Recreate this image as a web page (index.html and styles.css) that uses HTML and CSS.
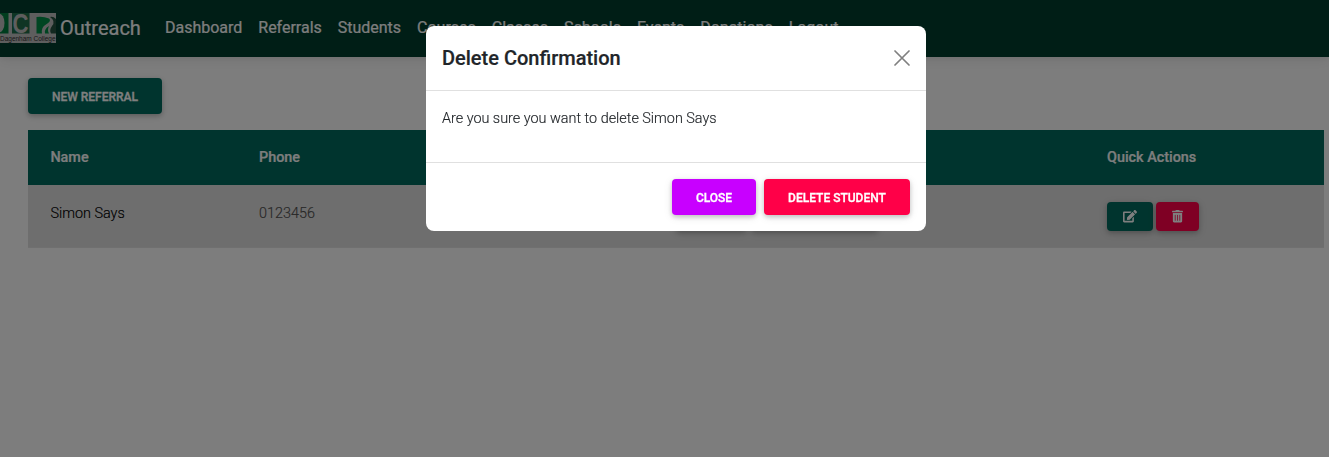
FILE: index.html
```html
<!DOCTYPE html>
<html lang="en">
<head>
<meta charset="utf-8">
<title>Outreach</title>
<link rel="stylesheet" href="styles.css">
</head>
<body>
<nav class="navbar">
  <a class="brand">
    <svg class="logo" width="56" height="30" viewBox="0 0 56 30">
      <rect width="56" height="30" fill="#bdbdbd"/>
      <rect width="8.500" height="20.500" fill="#007a3c"/>
      <ellipse cx="-1" cy="10" rx="5.500" ry="9.500" fill="#bdbdbd"/>
      <rect x="12" width="17.500" height="20.500" fill="#1f6a48"/>
      <text class="logo-letter" x="12.500" y="20" textLength="16" lengthAdjust="spacingAndGlyphs">C</text>
      <path d="M36.500 4Q43 3 49 5.500Q52 8 46 11.500Q41 14 42 20.500H36.500Z" fill="#008a45"/>
      <path d="M50 4Q53 3 56 6V20.500H51Q49 17 52 13Q56 8 50 4Z" fill="#24503e"/>
      <path d="M45 20.500Q44 16 49 13Q47 17 49 20.500Z" fill="#008a45"/>
      <text class="logo-caption" x="0" y="28" textLength="55.500" lengthAdjust="spacingAndGlyphs">Dagenham College</text>
    </svg>
    <span>Outreach</span>
  </a>
  <div class="links">
    <a>Dashboard</a><a>Referrals</a><a>Students</a><a>Courses</a><a>Classes</a><a>Schools</a><a>Events</a><a>Donations</a><a>Logout</a>
  </div>
</nav>
<main class="page">
  <button class="btn btn-green">New Referral</button>
  <table class="table">
    <colgroup><col class="c-name"><col class="c-phone"><col class="c-status"><col class="c-actions"></colgroup>
    <thead><tr><th>Name</th><th>Phone</th><th></th><th>Quick Actions</th></tr></thead>
    <tbody><tr>
      <td class="name">Simon Says</td>
      <td>0123456</td>
      <td><div class="row-buttons"><span class="btn btn-sm btn-green w-a"></span><span class="btn btn-sm btn-green w-b"></span></div></td>
      <td><div class="row-buttons quick">
        <button class="btn btn-sm btn-green edit" aria-label="Edit"><svg width="14" height="12.400" viewBox="0 0 576 512"><path fill="currentColor" d="M402.600 83.200l90.200 90.200c3.800 3.800 3.800 10 0 13.800L274.400 405.600l-92.800 10.300c-12.400 1.400-22.900-9.100-21.500-21.500l10.300-92.800L388.800 83.200c3.800-3.800 10-3.800 13.800 0zm162-22.900l-48.800-48.800c-15.200-15.200-39.900-15.200-55.200 0l-35.400 35.400c-3.800 3.800-3.800 10 0 13.800l90.200 90.200c3.800 3.800 10 3.800 13.800 0l35.400-35.400c15.200-15.300 15.200-40 0-55.200zM384 346.200V448H64V128h229.800c3.200 0 6.200-1.300 8.500-3.500l40-40c7.600-7.600 2.200-20.500-8.500-20.500H48C21.500 64 0 85.500 0 112v352c0 26.500 21.500 48 48 48h352c26.500 0 48-21.500 48-48V306.200c0-10.700-12.900-16-20.500-8.500l-40 40c-2.200 2.300-3.500 5.300-3.500 8.500z"/></svg></button>
        <button class="btn btn-sm btn-red delete" aria-label="Delete"><svg width="11" height="12.400" viewBox="0 0 448 512"><path fill="currentColor" fill-rule="evenodd" d="M32 464a48 48 0 0 0 48 48h288a48 48 0 0 0 48-48V128H32zm272-256a16 16 0 0 1 32 0v224a16 16 0 0 1-32 0zm-96 0a16 16 0 0 1 32 0v224a16 16 0 0 1-32 0zm-96 0a16 16 0 0 1 32 0v224a16 16 0 0 1-32 0zM432 32H312l-9.400-18.700A24 24 0 0 0 281.100 0H166.800a23.700 23.700 0 0 0-21.400 13.300L136 32H16A16 16 0 0 0 0 48v32a16 16 0 0 0 16 16h416a16 16 0 0 0 16-16V48a16 16 0 0 0-16-16z"/></svg></button>
      </div></td>
    </tr></tbody>
  </table>
</main>
<div class="backdrop">
  <section class="modal" role="dialog" aria-labelledby="modal-title">
    <header class="modal-header">
      <h5 class="modal-title" id="modal-title">Delete Confirmation</h5>
      <svg class="close-icon" width="16" height="16" viewBox="0 0 16 16"><path d="M1 1L15 15M15 1L1 15" stroke="#808080" stroke-width="1.700" stroke-linecap="round"/></svg>
    </header>
    <div class="modal-body">Are you sure you want to delete Simon Says</div>
    <footer class="modal-footer">
      <button class="btn btn-purple close">Close</button>
      <button class="btn btn-red confirm">Delete Student</button>
    </footer>
  </section>
</div>
</body>
</html>
```
FILE: styles.css
```css
* { box-sizing: border-box; }
html, body { height: 100%; }
body {
  margin: 0;
  overflow: hidden;
  background: #fbfbfb;
  color: #4f4f4f;
  font: 400 16px/1.6 Roboto, sans-serif;
}
.navbar {
  position: relative;
  display: flex;
  align-items: center;
  height: 57px;
  padding-bottom: 1px;
  background: #003d2c;
  color: #fbfbfb;
  box-shadow: 0 4px 12px rgba(0, 0, 0, .07), 0 2px 4px rgba(0, 0, 0, .05);
}
.brand {
  display: flex;
  align-items: center;
  gap: 4px;
  width: 157px;
  font-size: 20px;
}
.brand span, .links { -webkit-text-stroke: .2px currentColor; }
.logo { flex: none; }
.logo-letter { font: 700 27px "Liberation Sans", sans-serif; fill: #bdbdbd; }
.logo-caption { font: 7px "Liberation Sans", sans-serif; fill: #303030; }
.links { display: flex; letter-spacing: -.012px; }
.links a { padding: 8px; }
.page { padding: 21px 5px 0 28px; }
.btn {
  display: inline-flex;
  align-items: center;
  justify-content: center;
  height: 36px;
  padding: 2px 0 0;
  border: 0;
  border-radius: 4px;
  color: #fff;
  font: 500 12px/1.5 Roboto, sans-serif;
  -webkit-text-stroke: .3px currentColor;
  text-transform: uppercase;
  white-space: nowrap;
  box-shadow: 0 2px 5px rgba(0, 0, 0, .2), 0 2px 10px rgba(0, 0, 0, .1);
}
.page > .btn { display: flex; width: 134px; }
.btn-green { background: #00695c; }
.btn-red { background: #ff0048; }
.btn-purple { background: #c800ff; }
.btn-sm { height: 29px; padding: 0; }
.w-a { width: 71px; }
.w-b { width: 127px; }
.edit { width: 46px; }
.delete { width: 43px; }
.close { width: 84px; }
.confirm { width: 146px; }
.table {
  width: 100%;
  margin-top: 16px;
  table-layout: fixed;
  border-collapse: separate;
  border-spacing: 0;
  font-size: 14.400px;
}
.c-name { width: 208.600px; }
.c-phone { width: 417px; }
.c-status { width: 431px; }
.table th, .table td {
  padding: 16px 22.400px;
  text-align: left;
  vertical-align: top;
  line-height: 23px;
}
.table th {
  height: 55px;
  font-weight: 500;
  color: #fbfbfb;
  background: #00695c;
  -webkit-text-stroke: .2px currentColor;
}
.table td {
  height: 63px;
  padding-top: 17px;
  padding-bottom: 15px;
  font-weight: 300;
  background: #dcdcdc;
  border-bottom: 1px solid #e0e0e0;
  -webkit-text-stroke: .15px currentColor;
}
.table td.name { color: #000; }
.row-buttons { display: flex; gap: 4px; }
.row-buttons.quick { gap: 3px; }
.backdrop {
  position: fixed;
  inset: 0;
  display: flex;
  align-items: flex-start;
  justify-content: center;
  padding: 26px 0 0 23px;
  background: rgba(0, 0, 0, .5);
}
.modal {
  width: 500px;
  border-radius: 8px;
  background: #fff;
}
.modal-header {
  display: flex;
  align-items: center;
  justify-content: space-between;
  height: 65px;
  padding: 0 16px;
  border-bottom: 1px solid #e0e0e0;
}
.modal-title { margin: 0; color: #212529; font-size: 20px; font-weight: 500; -webkit-text-stroke: .2px currentColor; }
.modal-body {
  height: 71px;
  padding: 16px;
  color: #212529;
  font-size: 14.400px;
  font-weight: 300;
  -webkit-text-stroke: .15px currentColor;
}
.modal-footer {
  display: flex;
  justify-content: flex-end;
  gap: 8px;
  height: 69px;
  padding: 16px;
  border-top: 1px solid #e0e0e0;
}
```
